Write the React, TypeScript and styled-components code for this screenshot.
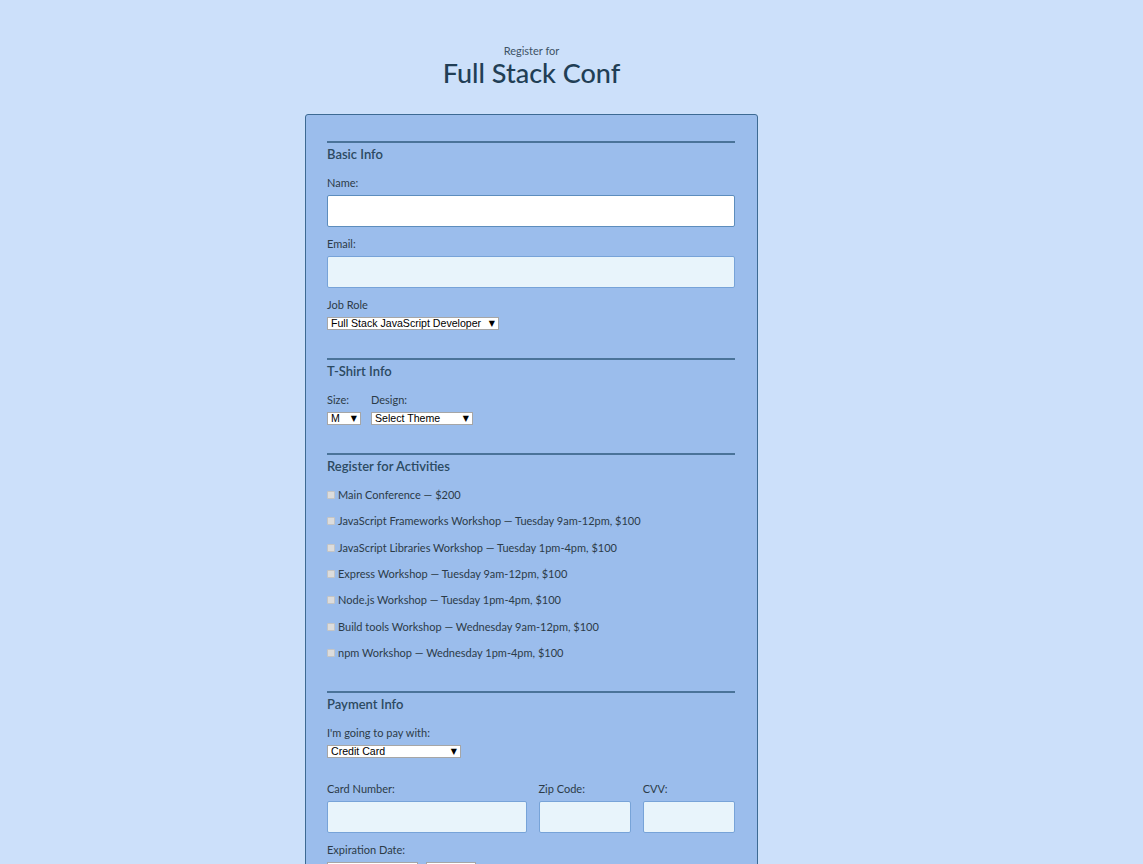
import React from 'react';
import styled, { createGlobalStyle } from 'styled-components';

const GlobalStyle = createGlobalStyle`
  html, body {
    margin: 0;
    padding: 0;
    background: #cce0fa;
  }
  body {
    font-family: 'Lato', 'Noto Sans', sans-serif;
    color: #2c3b48;
  }
`;

const Page = styled.div`
  display: flex;
  flex-direction: column;
  align-items: center;
  padding: 0 80px 40px 0;
`;

const Header = styled.header`
  text-align: center;
  padding-top: 44px;
  margin-bottom: 26px;
`;

const Kicker = styled.p`
  margin: 0;
  font-size: 11px;
  line-height: 14px;
  color: #3d5366;
`;

const Title = styled.h1`
  margin: 0;
  font-size: 27px;
  line-height: 30px;
  font-weight: 500;
  color: #213e55;
`;

const Card = styled.form`
  width: 453px;
  box-sizing: border-box;
  padding: 26px 22px 40px 21px;
  background: #9bbdec;
  border: 1px solid #3d6a93;
  border-radius: 3px;
`;

const Section = styled.fieldset`
  margin: 0 0 28px;
  padding: 0;
  border: none;
  border-top: 2px solid #4a7399;
  min-width: 0;
`;

const SectionTitle = styled.h2`
  margin: 3px 0 14px;
  font-size: 13px;
  line-height: 16px;
  font-weight: 600;
  color: #2c4a62;
`;

const Label = styled.label`
  display: block;
  font-size: 11px;
  line-height: 14px;
  margin-bottom: 5px;
  color: #2c3b48;
`;

const TextInput = styled.input<{ $focused?: boolean }>`
  display: block;
  width: 100%;
  height: 32px;
  box-sizing: border-box;
  margin: 0 0 10px;
  padding: 0 9px;
  font-family: inherit;
  font-size: 13px;
  background: ${(p) => (p.$focused ? '#ffffff' : '#e8f4fb')};
  border: 1px solid ${(p) => (p.$focused ? '#5d8dbd' : '#77a3d8')};
  border-radius: 2px;
  outline: none;
`;

const SelectWrap = styled.div<{ $width: number; $mt: number }>`
  position: relative;
  width: ${(p) => p.$width}px;
  height: 13px;
  margin-top: ${(p) => p.$mt}px;
`;

const Select = styled.select`
  appearance: none;
  -webkit-appearance: none;
  display: block;
  width: 100%;
  height: 13px;
  box-sizing: border-box;
  margin: 0;
  padding: 0 0 0 3px;
  font-family: 'Liberation Sans', Arial, sans-serif;
  font-size: 10.6px;
  line-height: 11px;
  color: #000;
  background: #fff;
  border: 1px solid #a6a6a6;
  border-radius: 0;
`;

const Arrow = styled.span`
  position: absolute;
  right: 4px;
  top: 0;
  font-family: 'DejaVu Sans', sans-serif;
  font-size: 8px;
  line-height: 13px;
  color: #000;
  pointer-events: none;
`;

const Row = styled.div<{ $gap: number }>`
  display: flex;
  gap: ${(p) => p.$gap}px;
`;

const Column = styled.div<{ $grow?: number; $width?: number }>`
  display: flex;
  flex-direction: column;
  flex: ${(p) => (p.$grow ? `${p.$grow} 1 0` : `0 0 ${p.$width}px`)};
  min-width: 0;
`;

const ActivityList = styled.div`
  display: flex;
  flex-direction: column;
  gap: 12.33px;
  padding-bottom: 3px;
`;

const Activity = styled.label`
  display: flex;
  align-items: center;
  font-size: 11px;
  line-height: 14px;
  color: #2c3b48;
`;

const Check = styled.input`
  appearance: none;
  -webkit-appearance: none;
  width: 8px;
  height: 8px;
  margin: 0 3px 0 0;
  box-sizing: border-box;
  background: #dcdcdc;
  border: 1px solid #c4c4c4;
  border-radius: 1px;
`;

const Spacer = styled.div<{ $h: number }>`
  height: ${(p) => p.$h}px;
`;

const Dropdown = ({
  width,
  value,
  mt = 0,
}: {
  width: number;
  value: string;
  mt?: number;
}) => (
  <SelectWrap $width={width} $mt={mt}>
    <Select defaultValue={value}>
      <option>{value}</option>
    </Select>
    <Arrow>▼</Arrow>
  </SelectWrap>
);

const activities = [
  'Main Conference — $200',
  'JavaScript Frameworks Workshop — Tuesday 9am-12pm, $100',
  'JavaScript Libraries Workshop — Tuesday 1pm-4pm, $100',
  'Express Workshop — Tuesday 9am-12pm, $100',
  'Node.js Workshop — Tuesday 1pm-4pm, $100',
  'Build tools Workshop — Wednesday 9am-12pm, $100',
  'npm Workshop — Wednesday 1pm-4pm, $100',
];

export default function App() {
  return (
    <>
      <GlobalStyle />
      <Page>
        <Header>
          <Kicker>Register for</Kicker>
          <Title>Full Stack Conf</Title>
        </Header>
        <Card onSubmit={(e) => e.preventDefault()}>
          <Section>
            <SectionTitle>Basic Info</SectionTitle>
            <Label htmlFor="name">Name:</Label>
            <TextInput id="name" type="text" $focused autoFocus />
            <Label htmlFor="mail">Email:</Label>
            <TextInput id="mail" type="email" />
            <Label>Job Role</Label>
            <Dropdown width={172} value="Full Stack JavaScript Developer" mt={2} />
          </Section>

          <Section>
            <SectionTitle>T-Shirt Info</SectionTitle>
            <Row $gap={10}>
              <Column $width={34}>
                <Label>Size:</Label>
                <Dropdown width={34} value="M" />
              </Column>
              <Column $width={102}>
                <Label>Design:</Label>
                <Dropdown width={102} value="Select Theme" />
              </Column>
            </Row>
          </Section>

          <Section>
            <SectionTitle>Register for Activities</SectionTitle>
            <ActivityList>
              {activities.map((a) => (
                <Activity key={a}>
                  <Check type="checkbox" />
                  {a}
                </Activity>
              ))}
            </ActivityList>
          </Section>

          <Section>
            <SectionTitle>Payment Info</SectionTitle>
            <Label>I'm going to pay with:</Label>
            <Dropdown width={134} value="Credit Card" />
            <Spacer $h={24} />
            <Row $gap={12}>
              <Column $grow={199}>
                <Label htmlFor="cc-num">Card Number:</Label>
                <TextInput id="cc-num" type="text" />
              </Column>
              <Column $grow={92}>
                <Label htmlFor="zip">Zip Code:</Label>
                <TextInput id="zip" type="text" />
              </Column>
              <Column $grow={92}>
                <Label htmlFor="cvv">CVV:</Label>
                <TextInput id="cvv" type="text" />
              </Column>
            </Row>
            <Label>Expiration Date:</Label>
            <Row $gap={8}>
              <Dropdown width={91} value="1 - January" />
              <Dropdown width={50} value="2016" />
            </Row>
          </Section>
        </Card>
      </Page>
    </>
  );
}
